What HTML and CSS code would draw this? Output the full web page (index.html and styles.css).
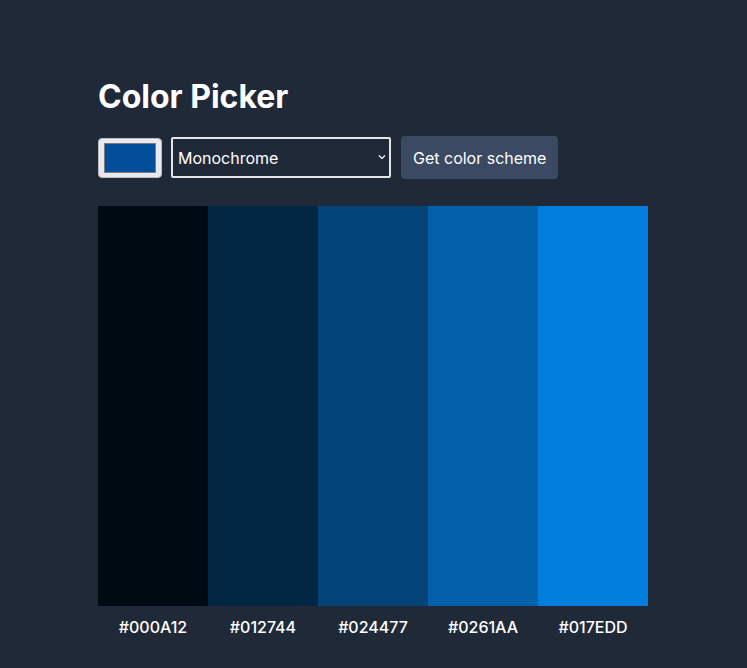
FILE: index.html
```html
<!DOCTYPE html>
<html lang="en">
<head>
<meta charset="utf-8">
<title>Color Picker</title>
<link rel="stylesheet" href="styles.css">
</head>
<body>
<main class="app">
  <h1 class="title">Color Picker</h1>
  <form class="controls">
    <input class="seed" type="color" value="#024e9b">
    <div class="select-wrap">
      <select class="mode">
        <option>Monochrome</option>
        <option>Monochrome-dark</option>
        <option>Monochrome-light</option>
        <option>Analogic</option>
        <option>Complement</option>
      </select>
      <svg class="chevron" width="8" height="6" viewBox="0 0 8 6"><path d="M1 1.5 L4 4.5 L7 1.5" fill="none" stroke="#ffffff" stroke-width="1.2"/></svg>
    </div>
    <button class="get" type="button">Get color scheme</button>
  </form>
  <section class="scheme">
    <div class="col"><div class="swatch" style="background:#000A12"></div><p class="hex">#000A12</p></div>
    <div class="col"><div class="swatch" style="background:#012744"></div><p class="hex">#012744</p></div>
    <div class="col"><div class="swatch" style="background:#024477"></div><p class="hex">#024477</p></div>
    <div class="col"><div class="swatch" style="background:#0261AA"></div><p class="hex">#0261AA</p></div>
    <div class="col"><div class="swatch" style="background:#017EDD"></div><p class="hex">#017EDD</p></div>
  </section>
</main>
</body>
</html>
```
FILE: styles.css
```css
* { box-sizing: border-box; }
html, body { margin: 0; padding: 0; }
body {
  background: #1f2937;
  color: #ffffff;
  font-family: Inter, "Noto Sans", sans-serif;
  min-height: 668px;
}
.app {
  width: 550px;
  margin-left: 98px;
  padding-top: 77px;
}
.title {
  font-size: 32px;
  font-weight: 700;
  line-height: 40px;
  margin: 0 0 19px 0;
}
.controls {
  display: flex;
  align-items: center;
  gap: 9px;
  height: 43px;
  margin: 0 0 27px 0;
}
.seed {
  -webkit-appearance: none;
  appearance: none;
  width: 64px;
  height: 40px;
  padding: 0;
  margin: 0;
  border: 1px solid #bdbcc4;
  border-radius: 4px;
  background: #e9e8ee;
  cursor: pointer;
}
.seed::-webkit-color-swatch-wrapper { padding: 4px 5px; }
.seed::-webkit-color-swatch { border: 1px solid #7b7b80; border-radius: 0; }
.select-wrap {
  position: relative;
  width: 220px;
  height: 41px;
}
.mode {
  -webkit-appearance: none;
  appearance: none;
  width: 100%;
  height: 100%;
  background: #1f2937;
  color: #ffffff;
  border: 2px solid #e5e7eb;
  border-radius: 2px;
  font-family: Inter, "Noto Sans", sans-serif;
  font-size: 16px;
  padding: 0 24px 0 5px;
  margin: 0;
}
.chevron {
  position: absolute;
  right: 5px;
  top: 17px;
  pointer-events: none;
}
.get {
  margin-left: 1px;
  height: 43px;
  padding: 0 12px;
  background: #3b4962;
  color: #ffffff;
  border: none;
  border-radius: 4px;
  font-family: Inter, "Noto Sans", sans-serif;
  font-size: 16px;
}
.scheme {
  display: grid;
  grid-template-columns: repeat(5, 1fr);
}
.col { display: flex; flex-direction: column; }
.swatch { height: 400px; }
.hex {
  margin: 0;
  text-align: center;
  font-size: 16px;
  font-weight: 500;
  line-height: 20px;
  padding-top: 11px;
}
```
